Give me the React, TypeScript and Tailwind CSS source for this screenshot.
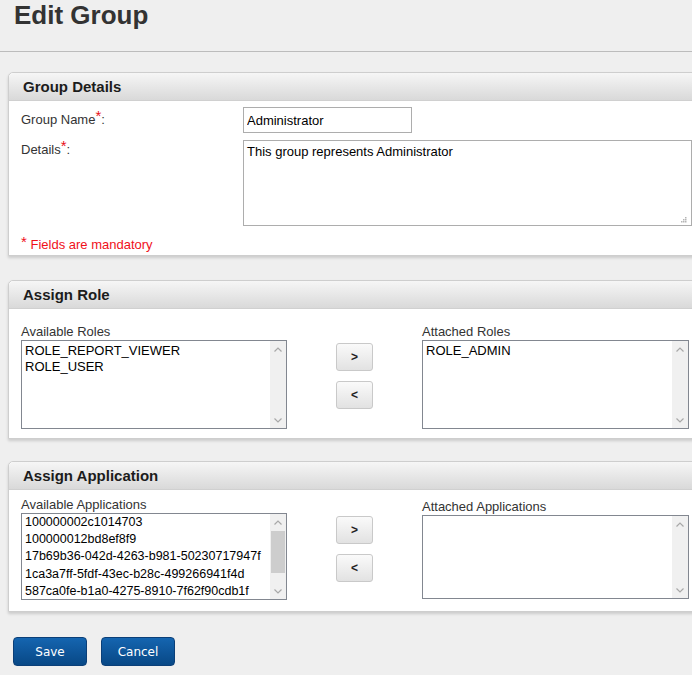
import React from "react";

const roles = ["ROLE_REPORT_VIEWER", "ROLE_USER"];
const apps = [
  "100000002c1014703",
  "100000012bd8ef8f9",
  "17b69b36-042d-4263-b981-50230717947f",
  "1ca3a7ff-5fdf-43ec-b28c-499266941f4d",
  "587ca0fe-b1a0-4275-8910-7f62f90cdb1f",
];

function Chevron({ up }: { up?: boolean }) {
  return (
    <svg width="8" height="5" viewBox="0 0 8 5" className="block">
      <polyline
        points={up ? "0.5,4.5 4,1 7.5,4.5" : "0.5,0.5 4,4 7.5,0.5"}
        fill="none"
        stroke="#a8a8a8"
        strokeWidth="1.2"
      />
    </svg>
  );
}

function ListBox({
  items,
  height,
  thumb,
  small,
}: {
  items: string[];
  height: string;
  thumb?: boolean;
  small?: boolean;
}) {
  return (
    <div className={`flex border border-[#828790] bg-white ${height}`}>
      <div
        className={`flex-1 overflow-hidden pl-[3px] text-black ${
          small ? "text-[12.5px] leading-[17.2px] pt-0" : "text-[13px] leading-[16px] pt-[2px]"
        }`}
      >
        {items.map((it) => (
          <div key={it} className="whitespace-nowrap">
            {it}
          </div>
        ))}
      </div>
      <div className="w-[16px] bg-[#f0f0f0] flex flex-col items-center">
        <div className="h-[16px] flex items-center justify-center">
          <Chevron up />
        </div>
        <div className="flex-1 w-full px-[1px]">
          {thumb && <div className="mt-[1px] h-[42px] w-full bg-[#cdcdcd]" />}
        </div>
        <div className="h-[16px] flex items-center justify-center">
          <Chevron />
        </div>
      </div>
    </div>
  );
}

function MoveButton({ label }: { label: string }) {
  return (
    <button className="w-[37px] h-[28px] rounded-[3px] border border-[#c9c9c9] bg-gradient-to-b from-[#fafafa] to-[#e2e2e2] text-[12px] font-bold text-[#222] leading-none">
      {label}
    </button>
  );
}

function Panel({ title, children, className = "" }: { title: string; children: React.ReactNode; className?: string }) {
  return (
    <div
      className={`ml-[8px] w-[720px] rounded-tl-[5px] border border-[#cecece] bg-white shadow-[0_2px_3px_rgba(0,0,0,0.15)] ${className}`}
    >
      <div className="h-[28px] rounded-tl-[5px] border-b border-[#d0d0d0] bg-gradient-to-b from-[#f6f6f6] to-[#d9d9d9] pl-[14px] text-[15px] font-bold leading-[28px] text-[#1c1c1c]">
        {title}
      </div>
      {children}
    </div>
  );
}

function Star() {
  return <span className="relative -top-[3px] text-[15px] leading-none text-[#e8101a]">*</span>;
}

function Transfer({
  leftLabel,
  rightLabel,
  left,
  right,
  pt,
  pb,
  boxH,
  thumb,
  small,
}: {
  leftLabel: string;
  rightLabel: string;
  left: string[];
  right: string[];
  pt: string;
  pb: string;
  boxH: string;
  thumb?: boolean;
  small?: boolean;
}) {
  return (
    <div className={`flex pl-[12px] ${pt} ${pb}`}>
      <div className="w-[266px]">
        <div className="text-[13px] leading-[16px] text-[#333]">{leftLabel}</div>
        <ListBox items={left} height={boxH} thumb={thumb} small={small} />
      </div>
      <div className="w-[135px] flex flex-col items-center pt-[19px] gap-[10px]">
        <MoveButton label=">" />
        <MoveButton label="<" />
      </div>
      <div className="w-[267px]">
        <div className={`text-[13px] leading-[16px] text-[#333] ${small ? "pt-[2px]" : ""}`}>{rightLabel}</div>
        <ListBox items={right} height={small ? "h-[84px]" : boxH} />
      </div>
    </div>
  );
}

export default function App() {
  return (
    <div className="w-[692px] min-h-[675px] overflow-hidden bg-[#efefef] [font-family:'Liberation_Sans',Arial,sans-serif] text-[#333]">
      <h1 className="h-[51px] pl-[14px] text-[26px] font-bold leading-[30px] text-[#333]">Edit Group</h1>
      <div className="border-t border-[#bcbcbc]" />

      <Panel title="Group Details" className="mt-[20px]">
        <div className="pl-[12px] pt-[6px] pb-[2px]">
          <div className="flex items-center">
            <div className="w-[222px] text-[13px]">
              Group Name
              <Star />:
            </div>
            <input
              readOnly
              value="Administrator"
              className="h-[26px] w-[169px] border border-[#adadad] px-[3px] text-[13px] text-black outline-none"
            />
          </div>
          <div className="mt-[7px] flex">
            <div className="w-[222px] pt-[1px] text-[13px] leading-[16px]">
              Details
              <Star />:
            </div>
            <div className="relative h-[86px] w-[449px] border border-[#adadad] bg-white px-[3px] pt-[3px] text-[13px] leading-[16px] text-black">
              This group represents Administrator
              <svg width="6" height="6" viewBox="0 0 6 6" className="absolute bottom-[2px] right-[4px]">
                <rect x="4" y="0" width="1.5" height="1.5" fill="#b5b5b5" />
                <rect x="2" y="2" width="1.5" height="1.5" fill="#b5b5b5" />
                <rect x="4" y="2" width="1.5" height="1.5" fill="#b5b5b5" />
                <rect x="0" y="4" width="1.5" height="1.5" fill="#b5b5b5" />
                <rect x="2" y="4" width="1.5" height="1.5" fill="#b5b5b5" />
                <rect x="4" y="4" width="1.5" height="1.5" fill="#b5b5b5" />
              </svg>
            </div>
          </div>
          <div className="mt-[10px] text-[13px] leading-[16px] text-[#f0101a]">
            <span className="relative -top-[2px] text-[15px] leading-none">*</span> Fields are mandatory
          </div>
        </div>
      </Panel>

      <Panel title="Assign Role" className="mt-[24px]">
        <Transfer
          leftLabel="Available Roles"
          rightLabel="Attached Roles"
          left={roles}
          right={["ROLE_ADMIN"]}
          pt="pt-[15px]"
          pb="pb-[9px]"
          boxH="h-[89px]"
        />
      </Panel>

      <Panel title="Assign Application" className="mt-[22px]">
        <Transfer
          leftLabel="Available Applications"
          rightLabel="Attached Applications"
          left={apps}
          right={[]}
          pt="pt-[7px]"
          pb="pb-[11px]"
          boxH="h-[87px]"
          thumb
          small
        />
      </Panel>

      <div className="mt-[25px] ml-[13px] flex gap-[14px]">
        <button className="h-[29px] w-[74px] rounded-[4px] border border-[#0b3f78] bg-gradient-to-b from-[#1565b0] to-[#084886] text-[12px] text-white [font-family:'DejaVu_Sans',Verdana,sans-serif]">
          Save
        </button>
        <button className="h-[29px] w-[74px] rounded-[4px] border border-[#0b3f78] bg-gradient-to-b from-[#1565b0] to-[#084886] text-[12px] text-white [font-family:'DejaVu_Sans',Verdana,sans-serif]">
          Cancel
        </button>
      </div>
    </div>
  );
}
